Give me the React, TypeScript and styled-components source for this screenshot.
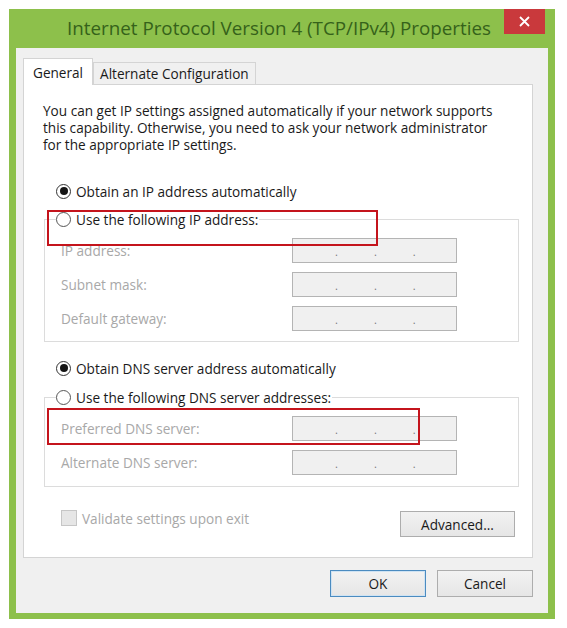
import React, { FC, ReactElement } from 'react';
import styled, { createGlobalStyle } from 'styled-components';

const GlobalStyle = createGlobalStyle`
    body {
        margin: 0;
        background: #fff;
        font-family: "Open Sans", "Noto Sans", sans-serif;
        color: #1a1a1a;
    }
`;

const Window = styled.div`
    margin: 9px 0 0 9px;
    width: 546px;
    background: #8dc04b;
    display: flex;
    flex-direction: column;
`;

const TitleBar = styled.div`
    height: 39px;
    display: grid;
    grid-template-columns: 1fr auto 1fr;
    align-items: center;
    padding-right: 6px;
`;

const Title = styled.div`
    grid-column: 2;
    font-size: 18.8px;
    color: #35621a;
    white-space: nowrap;
    margin-top: -2px;
`;

const Close = styled.button`
    grid-column: 3;
    justify-self: end;
    align-self: start;
    margin-right: 4px;
    width: 41px;
    height: 25px;
    border: none;
    padding: 0;
    background: #c9393c;
    display: flex;
    align-items: center;
    justify-content: center;
`;

const Client = styled.div`
    margin: 0 7px 6px;
    height: 565px;
    box-sizing: border-box;
    background: #f0f0f0;
    padding: 10px 15px 0 7px;
    font-size: 13.6px;
`;

const TabRow = styled.div`
    display: flex;
    align-items: flex-end;
    margin-bottom: -1px;
    position: relative;
    z-index: 1;
`;

const Tab = styled.div<{ $active?: boolean }>`
    box-sizing: border-box;
    height: ${({ $active }) => ($active ? '27px' : '22px')};
    margin-bottom: ${({ $active }) => ($active ? '0' : '1px')};
    padding: ${({ $active }) => ($active ? '0 9px' : '0 6px')};
    border: 1px solid #d4d4d4;
    border-bottom: none;
    background: ${({ $active }) => ($active ? '#fff' : '#f0f0f0')};
    display: flex;
    align-items: center;
    color: #1a1a1a;
    white-space: nowrap;
`;

const Panel = styled.div`
    position: relative;
    box-sizing: border-box;
    height: 474px;
    background: #fff;
    border: 1px solid #d4d4d4;
    padding: 17px 13px 0 19px;
`;

const Intro = styled.p`
    margin: 0;
    line-height: 17px;
    white-space: nowrap;
`;

const RadioRow = styled.label<{ $indent?: number }>`
    display: flex;
    align-items: center;
    gap: 5px;
    height: 20px;
    margin-left: ${({ $indent }) => $indent ?? 0}px;
`;

const RadioDot = styled.span<{ $checked?: boolean }>`
    width: 13px;
    height: 13px;
    border-radius: 50%;
    border: 1px solid ${({ $checked }) => ($checked ? '#333' : '#555')};
    background: #fff;
    display: flex;
    align-items: center;
    justify-content: center;

    &::after {
        content: '';
        width: 8px;
        height: 8px;
        border-radius: 50%;
        background: ${({ $checked }) => ($checked ? '#151515' : 'transparent')};
    }
`;

const Group = styled.fieldset<{ $top: number; $bottom: number }>`
    margin: ${({ $top }) => $top}px 0 0 1px;
    width: 475px;
    box-sizing: border-box;
    border: 1px solid #dcdcdc;
    padding: 0 0 ${({ $bottom }) => $bottom}px 11px;
`;

const Legend = styled.legend`
    padding: 0 1px 0 0;
`;

const FieldRow = styled.div`
    display: flex;
    align-items: center;
    height: 25px;
    padding-left: 5px;
    margin-top: 9px;
`;

const FieldLabel = styled.span`
    width: 231px;
    color: #a8a8a8;
`;

const IpBox = styled.div`
    box-sizing: border-box;
    width: 165px;
    height: 25px;
    background: #f0f0f0;
    border: 1px solid #b4b4b4;
    display: flex;
    align-items: flex-end;
    gap: 36px;
    padding: 0 0 5px 42px;
    color: #777;
    font-size: 11px;
    line-height: 11px;
`;

const Spacer = styled.div<{ $h: number }>`
    height: ${({ $h }) => $h}px;
`;

const Footer = styled.div`
    display: flex;
    align-items: flex-start;
    justify-content: space-between;
    margin-top: 23px;
    padding: 0 4px 0 18px;
`;

const Check = styled.label`
    display: flex;
    align-items: center;
    gap: 5px;
    height: 16px;
    color: #a8a8a8;
`;

const Box = styled.span`
    width: 16px;
    height: 16px;
    box-sizing: border-box;
    background: #e6e6e6;
    border: 1px solid #c6c6c6;
`;

const Button = styled.button<{ $w: number; $h: number; $default?: boolean }>`
    width: ${({ $w }) => $w}px;
    height: ${({ $h }) => $h}px;
    font: inherit;
    color: #1a1a1a;
    padding: 0;
    background: linear-gradient(#f2f2f2, #e6e6e6);
    border: 1px solid ${({ $default }) => ($default ? '#4b8bc0' : '#adadad')};
    box-shadow: ${({ $default }) => ($default ? 'inset 0 0 0 1px #cfe3f3' : 'none')};
`;

const AdvancedButton = styled(Button)`
    margin-top: 1px;
`;

const Actions = styled.div`
    display: flex;
    justify-content: flex-end;
    gap: 11px;
    margin-top: 12px;
`;

const Mark = styled.div<{ $left: number; $top: number; $w: number; $h: number }>`
    position: absolute;
    left: ${({ $left }) => $left}px;
    top: ${({ $top }) => $top}px;
    width: ${({ $w }) => $w}px;
    height: ${({ $h }) => $h}px;
    box-sizing: border-box;
    border: 2px solid #c4141c;
    pointer-events: none;
`;

const Radio: FC<{ checked?: boolean; label: string; indent?: number }> = ({ checked, label, indent }): ReactElement => (
    <RadioRow $indent={indent}>
        <RadioDot $checked={checked} />
        {label}
    </RadioRow>
);

const Field: FC<{ label: string }> = ({ label }): ReactElement => (
    <FieldRow>
        <FieldLabel>{label}</FieldLabel>
        <IpBox>
            <span>.</span>
            <span>.</span>
            <span>.</span>
        </IpBox>
    </FieldRow>
);

const App: FC = (): ReactElement => (
    <>
        <GlobalStyle />
        <Window>
            <TitleBar>
                <Title>Internet Protocol Version 4 (TCP/IPv4) Properties</Title>
                <Close aria-label="Close">
                    <svg width="11" height="11" viewBox="0 0 11 11">
                        <path d="M1 1 L10 10 M10 1 L1 10" stroke="#fff" strokeWidth="1.8" />
                    </svg>
                </Close>
            </TitleBar>
            <Client>
                <TabRow>
                    <Tab $active>General</Tab>
                    <Tab>Alternate Configuration</Tab>
                </TabRow>
                <Panel>
                    <Intro>
                        You can get IP settings assigned automatically if your network supports
                        <br />
                        this capability. Otherwise, you need to ask your network administrator
                        <br />
                        for the appropriate IP settings.
                    </Intro>
                    <Spacer $h={28} />
                    <Radio checked indent={13} label="Obtain an IP address automatically" />
                    <Group $top={8} $bottom={10}>
                        <Legend>
                            <Radio label="Use the following IP address:" />
                        </Legend>
                        <Field label="IP address:" />
                        <Field label="Subnet mask:" />
                        <Field label="Default gateway:" />
                    </Group>
                    <Spacer $h={16} />
                    <Radio checked indent={13} label="Obtain DNS server address automatically" />
                    <Group $top={9} $bottom={11}>
                        <Legend>
                            <Radio label="Use the following DNS server addresses:" />
                        </Legend>
                        <Field label="Preferred DNS server:" />
                        <Field label="Alternate DNS server:" />
                    </Group>
                    <Footer>
                        <Check>
                            <Box />
                            Validate settings upon exit
                        </Check>
                        <AdvancedButton $w={115} $h={26}>Advanced...</AdvancedButton>
                    </Footer>
                    <Mark $left={23} $top={125} $w={331} $h={36} />
                    <Mark $left={23} $top={323} $w={373} $h={37} />
                </Panel>
                <Actions>
                    <Button $default $w={96} $h={27}>OK</Button>
                    <Button $w={96} $h={27}>Cancel</Button>
                </Actions>
            </Client>
        </Window>
    </>
);

export default App;
